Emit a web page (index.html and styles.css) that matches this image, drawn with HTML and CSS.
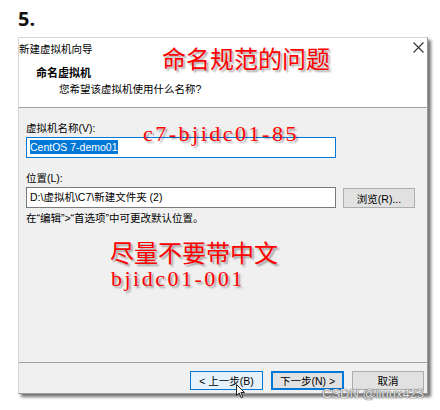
FILE: index.html
```html
<!DOCTYPE html>
<html lang="zh-CN">
<head>
    <meta charset="UTF-8">
    <title>新建虚拟机向导</title>
    <link rel="stylesheet" href="styles.css">
</head>
<body>
    <div class="page">
        <div class="step">5.</div>

        <div class="wizard">
            <div class="wizard-head">
                <div class="titlebar">
                    <span>新建虚拟机向导</span>
                    <svg class="close" width="11" height="11" viewBox="0 0 11 11">
                        <path d="M0.5 0.5 L10.5 10.5 M10.5 0.5 L0.5 10.5" stroke="#333" stroke-width="1.1" fill="none"/>
                    </svg>
                </div>
                <div class="head-title">命名虚拟机</div>
                <div class="head-sub">您希望该虚拟机使用什么名称?</div>
            </div>

            <div class="wizard-body">
                <div class="field-label">虚拟机名称(V):</div>
                <div class="textbox focused"><span class="sel">CentOS 7-demo01</span></div>

                <div class="field-label second">位置(L):</div>
                <div class="path-row">
                    <div class="textbox">D:\虚拟机\C7\新建文件夹 (2)</div>
                    <button class="btn browse">浏览(R)...</button>
                </div>
                <div class="hint">在“编辑”&gt;“首选项”中可更改默认位置。</div>
            </div>

            <div class="wizard-foot">
                <button class="btn hover">&lt; 上一步(B)</button>
                <button class="btn default">下一步(N) &gt;</button>
                <button class="btn">取消</button>
            </div>
        </div>

        <!-- red notes drawn over the screenshot -->
        <div class="note note-title">命名规范的问题</div>
        <div class="note note-latin note-name">c7-bjidc01-85</div>
        <div class="note note-cn">尽量不要带中文</div>
        <div class="note note-latin note-example">bjidc01-001</div>

        <svg class="cursor" width="10" height="15" viewBox="0 0 10 15">
            <path d="M0.5 0.5 L0.5 11.5 L3.2 9 L5.2 13.8 L6.8 13.1 L4.9 8.5 L8.5 8.5 Z" fill="#fff" stroke="#222" stroke-width="1"/>
        </svg>
        <div class="watermark">CSDN @linux423</div>
    </div>
</body>
</html>
```

FILE: styles.css
```css
body {
    margin: 0;
    background: #fff;
    font-family: "Liberation Sans", "Noto Sans CJK SC", sans-serif;
}

.page {
    position: relative;
    width: 440px;
    height: 410px;
    overflow: hidden;
}

.step {
    height: 37px;
    padding-left: 18px;
    box-sizing: border-box;
    padding-top: 6px;
    font-family: "Open Sans", sans-serif;
    font-weight: bold;
    font-size: 20px;
    line-height: 26px;
    color: #111;
}

.wizard {
    width: 410px;
    margin-left: 18px;
    box-sizing: border-box;
    border: 1px solid #9a9a9a;
    border-top-color: #d6d6d6;
    border-left-color: #d6d6d6;
    box-shadow: 3px 3px 3px rgba(0, 0, 0, 0.55);
    font-size: 10.5px;
    color: #000;
}

.wizard-head {
    background: #fff;
    height: 70px;
    box-sizing: border-box;
    border-bottom: 1px solid #a0a0a0;
}

.titlebar {
    display: flex;
    justify-content: space-between;
    align-items: center;
    height: 20px;
    padding-right: 3px;
}

.titlebar .close {
    margin-top: -2px;
}

.head-title {
    margin-top: 7px;
    padding-left: 17px;
    font-weight: bold;
    font-size: 11px;
    line-height: 16px;
}

.head-sub {
    padding-left: 40px;
    line-height: 16px;
}

.wizard-body {
    background: #f0f0f0;
    height: 255px;
    box-sizing: border-box;
    padding: 12px 0 0 7px;
    border-bottom: 1px solid #a0a0a0;
}

.field-label {
    line-height: 16px;
    margin-bottom: 1px;
}

.field-label.second {
    margin-top: 12px;
}

.textbox {
    width: 310px;
    height: 21px;
    box-sizing: border-box;
    border: 1px solid #7a7a7a;
    background: #fff;
    padding: 0 3px;
    line-height: 19px;
    white-space: nowrap;
}

.textbox.focused {
    border-color: #0078d7;
}

.textbox .sel {
    background: #0078d7;
    color: #fff;
    padding: 1px 0;
}

.path-row {
    display: flex;
    align-items: flex-start;
    gap: 7px;
}

.hint {
    margin-top: 2px;
    line-height: 16px;
}

.btn {
    font-family: inherit;
    font-size: 10.5px;
    color: #000;
    background: #e1e1e1;
    border: 1px solid #adadad;
    height: 20px;
    width: 72px;
    padding: 0;
    margin: 0;
}

.browse {
    margin-top: 1px;
}

.wizard-foot {
    background: #f0f0f0;
    height: 30px;
    box-sizing: border-box;
    padding: 8px 3px 0 0;
    display: flex;
    justify-content: flex-end;
    gap: 8px;
}

.wizard-foot .btn {
    height: 19px;
}

.btn.hover {
    background: #e5f1fb;
    border-color: #0078d7;
    width: 73px;
}

.btn.default {
    border: 2px solid #0078d7;
    width: 73px;
}

.note {
    position: absolute;
    color: #ff0000;
    text-shadow: 2px 2px 2px rgba(0, 0, 0, 0.35);
    white-space: nowrap;
}

.note-title,
.note-cn {
    font-family: "Noto Sans CJK SC", sans-serif;
    font-size: 24px;
    line-height: 24px;
}

.note-title {
    left: 162px;
    top: 46px;
}

.note-cn {
    left: 110px;
    top: 240px;
}

.note-latin {
    font-family: "Liberation Serif", serif;
    font-size: 22px;
    line-height: 22px;
    letter-spacing: 2.5px;
}

.note-name {
    left: 143px;
    top: 123px;
}

.note-example {
    left: 111px;
    top: 268px;
}

.cursor {
    position: absolute;
    left: 236px;
    top: 384px;
}

.watermark {
    position: absolute;
    left: 322px;
    top: 386px;
    font-size: 13px;
    line-height: 15px;
    color: #e4e4e4;
    text-shadow: 0 0 1px #555, 0 0 1px #555;
}
```
